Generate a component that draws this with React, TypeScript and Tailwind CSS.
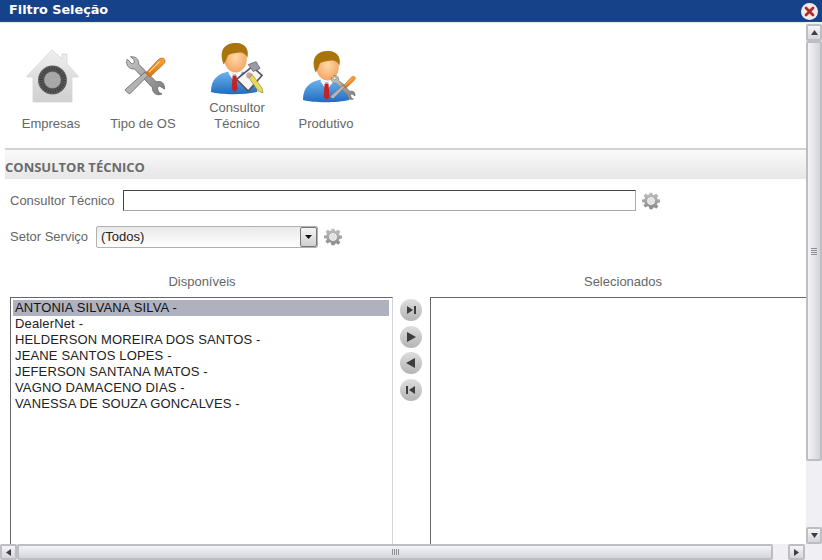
import React from "react";

const Gear = () => (
  <svg width="18" height="18" viewBox="0 0 24 24" className="shrink-0">
    <defs>
      <linearGradient id="gg" x1="0" y1="0" x2="0" y2="1">
        <stop offset="0" stopColor="#c0c0c0" />
        <stop offset="1" stopColor="#8a8a8a" />
      </linearGradient>
    </defs>
    <path
      fill="url(#gg)"
      fillRule="evenodd"
      d="M10 1h4l.7 3.2 2-.9 2.9-1.1 2.2 3-2 2.6.9 1.9 3.3.3v4l-3.300.7-.9 2 2 2.700-2.900 2.800-2.600-1.900-1.700.9L14 23h-4l-.7-3.200-1.900-.9-2.700 1.900-2.800-2.800 1.900-2.700-.9-2L0 13.900V10l3.200-.5.900-1.900-1.900-2.700 2.900-2.800 2.600 1.900 1.700-.8zM12 7a5 5 0 1 0 0 10 5 5 0 0 0 0-10z"
    />
    <circle cx="12" cy="12" r="4.500" fill="#e4e4e4" />
  </svg>
);

const House = () => (
  <svg width="54" height="54" viewBox="0 0 54 54">
    <defs>
      <linearGradient id="hs" x1="0" y1="0" x2="0" y2="1">
        <stop offset="0" stopColor="#efefef" />
        <stop offset="1" stopColor="#cfcfcf" />
      </linearGradient>
      <radialGradient id="dial">
        <stop offset="0" stopColor="#b4b4b4" />
        <stop offset="0.55" stopColor="#8a8a8a" />
        <stop offset="0.62" stopColor="#4c4c4c" />
        <stop offset="1" stopColor="#666" />
      </radialGradient>
    </defs>
    <path d="M26 1 L36 10 V5 H41 V15 L52 27 V28 H46 V53 H7 V28 H1 V27 Z" fill="url(#hs)" stroke="#d4d4d4" strokeWidth="0.8" />
    <circle cx="26.500" cy="31" r="14.500" fill="url(#dial)" />
    <circle cx="26.500" cy="31" r="12" fill="none" stroke="#3a3a3a" strokeWidth="3" strokeDasharray="1 1.500" />
    <circle cx="26.500" cy="31" r="8" fill="#a8a8a8" />
  </svg>
);

const ToolsShape = ({ id }: { id: string }) => (
  <>
    <defs>
      <linearGradient id={id + "m"} x1="0" y1="0" x2="1" y2="1">
        <stop offset="0" stopColor="#c9c9c9" />
        <stop offset="1" stopColor="#7c7c7c" />
      </linearGradient>
      <linearGradient id={id + "o"} x1="0" y1="1" x2="1" y2="0">
        <stop offset="0" stopColor="#d9700f" />
        <stop offset="1" stopColor="#f7a53c" />
      </linearGradient>
    </defs>
    <path
      d="M4 3 L10 9 L13 7 L12 3 L8 0 C14 -1 19 3 18 9 L40 31 C46 29 51 33 50 40 L44 36 L41 38 L43 44 L47 46 C41 49 35 45 35 38 L13 15 C7 16 1 10 4 3 Z"
      fill={"url(#" + id + "m)"}
      stroke="#666"
      strokeWidth="1"
    />
    <path d="M3 43 L1 41 L26 19 L30 23 L7 46 Z" fill="#b3b3b3" stroke="#666" strokeWidth="1" />
    <path d="M27 20 L42 4 C45 1 49 1 50 3 C52 6 50 8 48 10 L32 25 Z" fill={"url(#" + id + "o)"} stroke="#b65a08" strokeWidth="0.8" />
    <path d="M31 19 L44 6" stroke="#ffd9a0" strokeWidth="1.500" />
  </>
);

const Tools = () => (
  <svg width="42" height="42" viewBox="0 0 52 50">
    <ToolsShape id="t1" />
  </svg>
);

const Person = ({ id }: { id: string }) => (
  <g>
    <defs>
      <linearGradient id={id + "j"} x1="0" y1="0" x2="0" y2="1">
        <stop offset="0" stopColor="#6fb3ec" />
        <stop offset="1" stopColor="#1f6cc0" />
      </linearGradient>
      <radialGradient id={id + "f"} cx="0.5" cy="0.45" r="0.6">
        <stop offset="0" stopColor="#ffd9a8" />
        <stop offset="1" stopColor="#f2a160" />
      </radialGradient>
    </defs>
    <path d="M0 50 C0 36 8 31 18 29 L24 32 L32 29 C42 31 47 38 47 50 C35 53 10 53 0 50 Z" fill={"url(#" + id + "j)"} />
    <path d="M18 28 L24 33 L31 28 L31 31 L24 40 L18 31 Z" fill="#ffffff" />
    <path d="M22 33 L26 33 L27 47 L24 50 L21 47 Z" fill="#c22327" />
    <ellipse cx="25" cy="16" rx="11.500" ry="14" fill={"url(#" + id + "f)"} />
    <path d="M13 22 C9 12 10 1 24 0 C36 -1 39 8 37 15 C35 10 31 9 27 10 C22 11 19 11 17 13 C16 16 15 19 13 22 Z" fill="#a9740c" />
  </g>
);

const Consultant = () => (
  <svg width="53" height="53" viewBox="0 0 54 54" overflow="visible">
    <Person id="p1" />
    <path d="M26 37 L42 24 L52 33 L38 49 Z" fill="#f5f5f5" stroke="#555" strokeWidth="1.600" />
    <path d="M38 22 L46 19 L50 26 L43 29 Z" fill="#9a9aa8" stroke="#666" strokeWidth="0.8" />
    <circle cx="39" cy="33" r="3" fill="#c9a0a8" />
    <path d="M39 36 L42 32 L52 46 L53 51 L48 49 Z" fill="#e8d95a" stroke="#8a7b20" strokeWidth="0.6" />
  </svg>
);

const Produtivo = () => (
  <svg width="53" height="53" viewBox="0 0 54 54" overflow="visible">
    <Person id="p2" />
    <g transform="translate(27 25) scale(0.52)">
      <ToolsShape id="t2" />
    </g>
  </svg>
);

const tools = [
  { w: "w-[92px]", ml: "ml-[4px]", icon: <House />, label: ["Empresas"], h: "h-[54px] mb-[13px]" },
  { w: "w-[92px]", ml: "ml-[4px]", icon: <Tools />, label: ["Tipo de OS"], h: "h-[42px] mb-[18px]" },
  { w: "w-[96px]", ml: "ml-0", icon: <Consultant />, label: ["Consultor", "Técnico"], h: "h-[53px] mb-[4px]" },
  { w: "w-[82px]", ml: "ml-[7px]", icon: <Produtivo />, label: ["Produtivo"], h: "h-[53px] mb-[12px]" },
];

const names = [
  "ANTONIA SILVANA SILVA -",
  "DealerNet -",
  "HELDERSON MOREIRA DOS SANTOS -",
  "JEANE SANTOS LOPES -",
  "JEFERSON SANTANA MATOS -",
  "VAGNO DAMACENO DIAS -",
  "VANESSA DE SOUZA GONCALVES -",
];

const RoundBtn = ({ d }: { d: string }) => (
  <div className="w-[22px] h-[22px] rounded-full bg-gradient-to-b from-[#dedede] to-[#b4b4b4] flex items-center justify-center">
    <svg width="12" height="10" viewBox="0 0 12 10">
      <path d={d} fill="#3c3c3c" />
    </svg>
  </div>
);

const SbBtn = ({ d, w, h }: { d: string; w: string; h: string }) => (
  <div className={`${w} ${h} shrink-0 border-2 border-[#bdbdc4] rounded-[2px] bg-gradient-to-b from-[#f6f6f8] to-[#d5d5dc] flex items-center justify-center`}>
    <svg width="9" height="9" viewBox="0 0 9 9">
      <path d={d} fill="#3f3f3f" />
    </svg>
  </div>
);

const grip = [0, 1, 2, 3];

export default function App() {
  return (
    <div className="w-[822px] h-[560px] flex flex-col overflow-hidden bg-white font-['Liberation_Sans',Arial,sans-serif]">
      <div className="h-[22px] shrink-0 bg-[#164289] flex items-center justify-between pl-[9px] pr-[4px] border-b border-[#1f4a90]">
        <span className="text-white font-bold text-[12.800px] font-['DejaVu_Sans',sans-serif] leading-none">Filtro Seleção</span>
        <div className="w-[17px] h-[17px] rounded-full bg-[#f1ece8] flex items-center justify-center mt-[2px]">
          <svg width="11" height="11" viewBox="0 0 11 11">
            <path d="M2 2 L9 9 M9 2 L2 9" stroke="#b02a2a" strokeWidth="2.800" strokeLinecap="round" />
          </svg>
        </div>
      </div>

      <div className="flex-1 min-h-0 flex">
        <div className="flex-1 min-w-0 overflow-hidden flex flex-col border-t border-[#e4e4e4]">
          <div className="h-[125px] shrink-0 flex pl-[5px] items-end">
            {tools.map((t) => (
              <div key={t.label[0]} className={`${t.w} flex flex-col items-center text-[13px] leading-[16px] text-[#666] pb-[16px]`}>
                <div className={`${t.h} ${t.ml}`}>{t.icon}</div>
                {t.label.map((l) => (
                  <div key={l} className="text-center">{l}</div>
                ))}
              </div>
            ))}
          </div>
          <div className="ml-[5px] h-[2px] shrink-0 bg-[#d2d2d2]" />
          <div className="ml-[5px] h-[29px] shrink-0 bg-gradient-to-b from-[#fafafa] to-[#e6e6e6] flex items-center pt-[6px] text-[13px] font-bold text-[#6b6b6b] font-['Open_Sans',sans-serif]">
            CONSULTOR TÉCNICO
          </div>

          <div className="flex items-center h-[21px] mt-[11px] pl-[10px] text-[13px] text-[#666]">
            <span className="w-[113px]">Consultor Técnico</span>
            <div className="w-[513px] h-[21px] border border-[#a9a9a9] border-t-[#444] border-l-[#444] bg-white" />
            <div className="ml-[6px]"><Gear /></div>
          </div>

          <div className="flex items-center h-[22px] mt-[15px] pl-[10px] text-[13px] text-[#666]">
            <span className="w-[86px]">Setor Serviço</span>
            <div className="w-[222px] h-[22px] border border-[#b0b0b0] rounded-[2px] flex bg-gradient-to-b from-[#e9e9e9] to-[#ffffff]">
              <span className="flex-1 pl-[4px] text-[13px] leading-[20px] text-[#222]">(Todos)</span>
              <div className="w-[17px] h-full border border-[#777] rounded-[2px] bg-gradient-to-b from-[#f5f5f5] to-[#cfcfcf] flex items-center justify-center">
                <svg width="7" height="4" viewBox="0 0 7 4"><path d="M0 0H7L3.500 4Z" fill="#111" /></svg>
              </div>
            </div>
            <div className="ml-[6px]"><Gear /></div>
          </div>

          <div className="flex mt-[26px] min-h-0 flex-1">
            <div className="w-[393px] pl-[10px] shrink-0 flex flex-col">
              <div className="h-[23px] text-center text-[13px] leading-[16px] text-[#666] shrink-0 pl-[1px]">Disponíveis</div>
              <div className="flex-1 border-t border-l border-r border-t-[#666] border-l-[#666] border-r-[#d4d4d4] pl-[2px] pr-[3px] pt-[2px] text-[13px] tracking-[0.15px] leading-[16px] text-[#222]">
                {names.map((n, i) => (
                  <div key={n} className={`h-[16px] pl-[2px] whitespace-nowrap ${i === 0 ? "bg-[#b0b1bf] text-[#111]" : ""}`}>{n}</div>
                ))}
              </div>
            </div>
            <div className="w-[37px] shrink-0 flex flex-col items-center pt-[25px] pr-[1px] gap-[4.500px]">
              <RoundBtn d="M2 1 L8 5 L2 9 Z M9 1 H11 V9 H9 Z" />
              <RoundBtn d="M2 0 L11 5 L2 10 Z" />
              <RoundBtn d="M10 0 L1 5 L10 10 Z" />
              <RoundBtn d="M10 1 L4 5 L10 9 Z M1 1 H3 V9 H1 Z" />
            </div>
            <div className="flex-1 min-w-0 flex flex-col">
              <div className="h-[23px] text-center text-[13px] leading-[16px] text-[#666] shrink-0 pl-[10px]">Selecionados</div>
              <div className="flex-1 border-t border-l border-t-[#666] border-l-[#666]" />
            </div>
          </div>
        </div>

        <div className="w-[16px] shrink-0 flex flex-col bg-[#f0f0f4] pt-[2px]">
          <SbBtn w="w-[16px]" h="h-[17px]" d="M4.500 2 L8 7 H1 Z" />
          <div className="h-[420px] shrink-0 border-2 border-[#bdbdc4] rounded-[2px] bg-gradient-to-r from-[#f4f4f7] to-[#d4d4dc] flex flex-col items-center justify-center gap-[1px]">
            {grip.map((g) => (
              <div key={g} className="w-[6px] h-[1px] bg-[#8f8f98]" />
            ))}
          </div>
          <div className="flex-1" />
          <SbBtn w="w-[16px]" h="h-[17px]" d="M1 2 H8 L4.500 7 Z" />
        </div>
      </div>

      <div className="h-[16px] shrink-0 flex bg-[#f0f0f4] pr-[17px]">
        <SbBtn w="w-[17px]" h="h-[16px]" d="M7 1 V8 L2 4.500 Z" />
        <div className="w-[756px] shrink-0 border-2 border-[#bdbdc4] rounded-[2px] bg-gradient-to-b from-[#f4f4f7] to-[#d4d4dc] flex items-center justify-center gap-[1px]">
          {grip.map((g) => (
            <div key={g} className="w-[1px] h-[6px] bg-[#8f8f98]" />
          ))}
        </div>
        <div className="flex-1" />
        <SbBtn w="w-[17px]" h="h-[16px]" d="M2 1 L7 4.500 L2 8 Z" />
      </div>
    </div>
  );
}
